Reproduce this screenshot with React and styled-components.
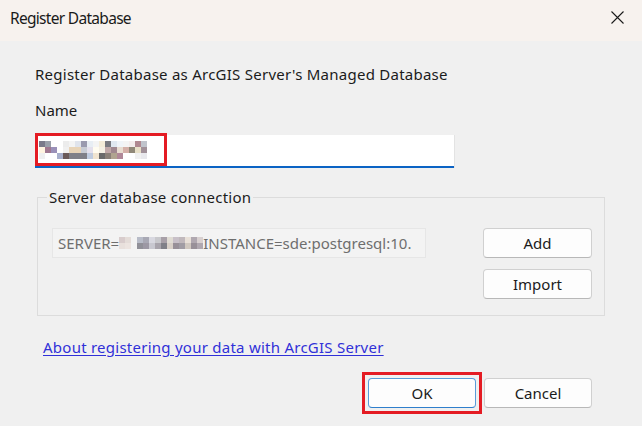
import React from 'react';
import styled, { createGlobalStyle } from 'styled-components';

const GlobalStyle = createGlobalStyle`
  html, body {
    margin: 0;
    padding: 0;
    background: #f0f0f0;
  }
  body {
    font-family: "Noto Sans", "Open Sans", "Liberation Sans", sans-serif;
    color: #1b1b1b;
  }
`;

const Window = styled.div`
  width: 642px;
  height: 426px;
  display: flex;
  flex-direction: column;
  background: #f0f0f0;
  overflow: hidden;
`;

const TitleBar = styled.div`
  height: 41px;
  flex-shrink: 0;
  display: flex;
  align-items: center;
  padding: 0 17px 0 10px;
  background: #f7f2ee;
`;

const Title = styled.span`
  font-size: 15.5px;
  letter-spacing: -0.7px;
  color: #1a1a1a;
  margin-top: -5px;
`;

const CloseBtn = styled.button`
  margin-left: auto;
  width: 16px;
  height: 16px;
  padding: 0;
  border: none;
  background: none;
  display: flex;
  align-items: center;
  justify-content: center;
  color: #1a1a1a;
  margin-top: -6px;
`;

const Body = styled.div`
  flex: 1;
  display: flex;
  flex-direction: column;
  padding: 23px 34px 0 35px;
`;

const Text = styled.div`
  font-size: 15px;
  letter-spacing: 0.25px;
  line-height: 20px;
`;

const Label = styled(Text)`
  margin-top: 16px;
  letter-spacing: 0;
`;

const InputWrap = styled.div`
  position: relative;
  width: 419px;
  height: 33px;
  margin-top: 15px;
  background: #fff;
  border-bottom: 2px solid #0b63c4;
  box-sizing: border-box;
  box-shadow: 1px 0 0 #e3e3e3;
`;

const Highlight = styled.div`
  position: absolute;
  left: 0;
  top: -2px;
  width: 132px;
  height: 33px;
  border: 3px solid #e41b23;
  box-sizing: border-box;
`;

const MosaicSvg = styled.svg`
  position: absolute;
  display: block;
`;

const Group = styled.fieldset`
  margin: 20px 0 0 2px;
  padding: 22px 12px 16px 14px;
  width: 568px;
  box-sizing: border-box;
  border: 1px solid #dcdcdc;
  border-radius: 0;
  display: flex;
  gap: 57px;
  min-inline-size: 0;
`;

const Legend = styled.legend`
  font-size: 15px;
  letter-spacing: 0.25px;
  padding: 0 2px;
  margin-left: -5px;
  line-height: 18px;
`;

const ConnField = styled.div`
  position: relative;
  width: 374px;
  height: 30px;
  box-sizing: border-box;
  border: 1px solid #e6e6e6;
  background: #f3f3f3;
  color: #6e6e6e;
  font-size: 15px;
  display: flex;
  align-items: center;
  padding-left: 5px;
  white-space: nowrap;
  overflow: hidden;
`;

const Redacted = styled.span`
  display: inline-block;
  flex-shrink: 0;
  width: 84px;
  height: 14px;
  position: relative;
`;

const ButtonColumn = styled.div`
  display: flex;
  flex-direction: column;
  gap: 11px;
`;

const Button = styled.button`
  width: ${p => p.$w || 109}px;
  height: 30px;
  box-sizing: border-box;
  background: #fdfdfd;
  border: 1px solid ${p => (p.$primary ? '#5a9bd8' : '#d0d0d0')};
  border-bottom-color: ${p => (p.$primary ? '#2f7fcc' : '#b8b8b8')};
  border-radius: 4px;
  font-family: inherit;
  font-size: 15px;
  color: #1b1b1b;
  padding: 0;
  cursor: pointer;
`;

const LinkRow = styled.div`
  margin-top: 21px;
  padding-left: 8px;
  line-height: 20px;
`;

const HelpLink = styled.a`
  font-size: 15px;
  letter-spacing: 0.25px;
  color: #3030d8;
  text-decoration: underline;
  text-underline-offset: 2px;
`;

const Footer = styled.div`
  display: flex;
  justify-content: flex-end;
  gap: 8px;
  margin-top: 21px;
  padding-right: 16px;
`;

const Marked = styled.div`
  outline: 3px solid #e41b23;
  outline-offset: 3px;
  display: flex;
`;

const nameMosaic = [
  ['#7a7a8a', '#9aa0aa', '#ffffff', '#ffffff', '#ececec', '#f4f4f4', '#e0e4ec', '#9a9aae', '#e8eef4', '#f4f4f4', '#f4ecd8', '#7a7a80', '#e0e8f0', '#f0f4f8', '#f4f4f4', '#f4ecec', '#b08890', '#c0c4cc'],
  ['#fff4e0', '#a07890', '#9a90b8', '#ffffff', '#f0f0f0', '#e8d4b8', '#e8d4b8', '#c8ccd4', '#e4e0ec', '#fffcf0', '#f4f0e4', '#c0a8a8', '#a08890', '#e8dcd0', '#d4b0a8', '#908878', '#e8e0c8', '#a09098'],
  ['#f0f0f0', '#ffffff', '#ffffff', '#a8b0cc', '#6a5a5a', '#808088', '#808088', '#808088', '#c0cce0', '#f0e4d0', '#6a6a6a', '#8a8078', '#b0a490', '#b08898', '#ffffff', '#ffffff', '#f0f0f0', '#e8e8ec'],
];

const serverMosaic = [
  ['#d8cccc', '#e4dcd8', '#f3f3f3', '#b8bcc8', '#a8a8b4', '#d8d8e0', '#c8c8cc', '#a8a0a8', '#e0dcd4', '#c8c0c8', '#c0b8bc', '#e8e0d8', '#b0a8b0', '#d8d0d0'],
  ['#e8e0dc', '#ece4e0', '#f3f3f3', '#909098', '#9c98a4', '#c8c8d0', '#a8a4ac', '#808088', '#d8d0c8', '#989098', '#a09ca4', '#d0c8c0', '#989098', '#b0a8b0'],
];

const Mosaic = ({ data, cell, x, y }) => {
  const rows = data.length;
  const cols = data[0].length;
  return (
    <MosaicSvg
      width={cols * cell}
      height={rows * cell}
      style={{ left: x, top: y }}
    >
      {data.map((row, r) =>
        row.map((c, i) => (
          <rect key={`${r}-${i}`} x={i * cell} y={r * cell} width={cell} height={cell} fill={c} />
        ))
      )}
    </MosaicSvg>
  );
};

const App = () => (
  <>
    <GlobalStyle />
    <Window>
      <TitleBar>
        <Title>Register Database</Title>
        <CloseBtn aria-label="Close">
          <svg width="13" height="13" viewBox="0 0 13 13" fill="none" stroke="currentColor" strokeWidth="1.1">
            <path d="M0.5 0.5l12 12M12.5 0.5l-12 12" />
          </svg>
        </CloseBtn>
      </TitleBar>
      <Body>
        <Text>Register Database as ArcGIS Server's Managed Database</Text>
        <Label>Name</Label>
        <InputWrap>
          <Mosaic data={nameMosaic} cell={6} x={4} y={6} />
          <Highlight />
        </InputWrap>

        <Group>
          <Legend>Server database connection</Legend>
          <ConnField>
            SERVER=
            <Redacted>
              <Mosaic data={serverMosaic} cell={6} x={0} y={1} />
            </Redacted>
            INSTANCE=sde:postgresql:10.
          </ConnField>
          <ButtonColumn>
            <Button>Add</Button>
            <Button>Import</Button>
          </ButtonColumn>
        </Group>

        <LinkRow>
          <HelpLink href="#">About registering your data with ArcGIS Server</HelpLink>
        </LinkRow>

        <Footer>
          <Marked>
            <Button $primary $w={108}>OK</Button>
          </Marked>
          <Button $w={108}>Cancel</Button>
        </Footer>
      </Body>
    </Window>
  </>
);

export default App;
